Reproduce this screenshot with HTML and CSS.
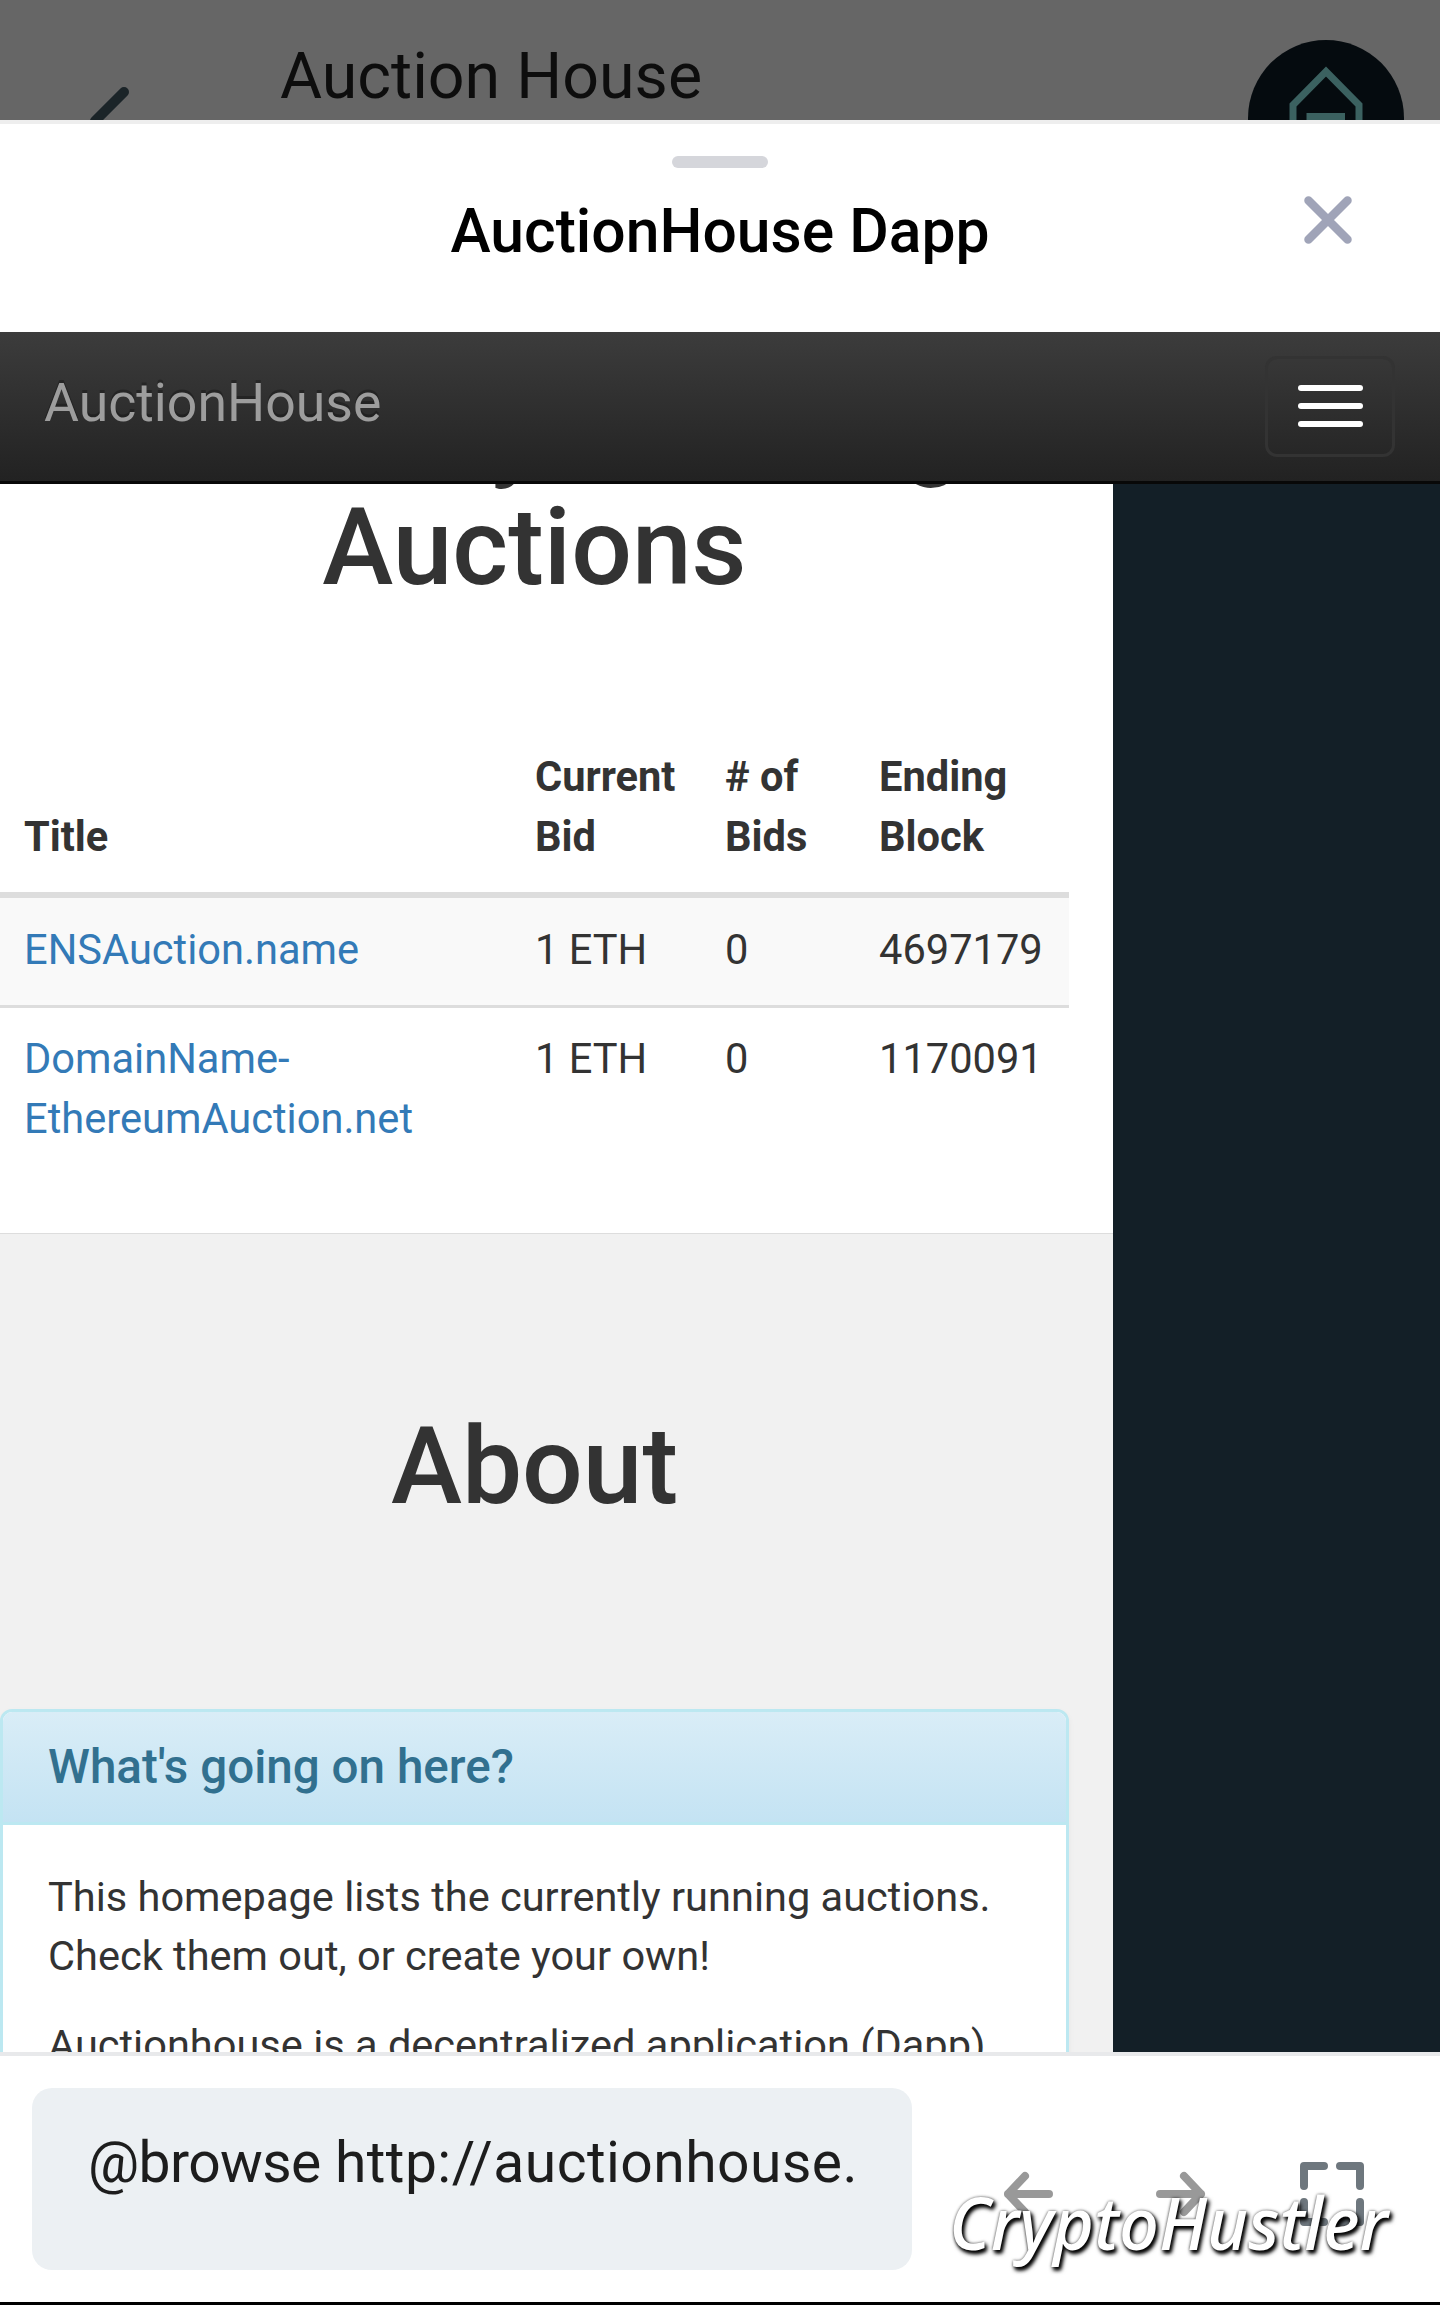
FILE: index.html
```
<!DOCTYPE html>
<html lang="en">
<head>
  <meta charset="UTF-8" />
  <title>AuctionHouse Dapp</title>
  <link rel="stylesheet" href="styles.css">
</head>
<body>
  <header class="chat-header">
    <svg class="back" width="60" height="60" viewBox="0 0 60 60"><path d="M39 7 L10 36 L39 65" /></svg>
    <span class="chat-title">Auction House</span>
    <svg class="avatar" width="156" height="80" viewBox="0 0 156 80">
      <circle cx="78" cy="78" r="78" />
      <path d="M45 110 V65 L78 31.5 L111 65 V110 Z" />
      <path d="M62 76.5 H93.5 V110 H62 Z" />
    </svg>
  </header>

  <div class="sheet-header">
    <div class="grip"></div>
    <h2 class="sheet-title">AuctionHouse Dapp</h2>
    <svg class="close" width="48" height="48" viewBox="0 0 48 48"><path d="M4.5 4.5 L43.5 43.5 M43.5 4.5 L4.5 43.5" /></svg>
  </div>

  <nav class="navbar">
    <a class="brand">AuctionHouse</a>
    <button class="toggle" type="button"><span></span><span></span><span></span></button>
  </nav>

  <main class="webview">
    <div class="page">
      <section class="auctions">
        <h1>Currently Running Auctions</h1>
        <table>
          <colgroup><col class="c-title"><col class="c-bid"><col class="c-count"><col class="c-block"></colgroup>
          <thead>
            <tr><th>Title</th><th>Current Bid</th><th># of<br>Bids</th><th>Ending Block</th></tr>
          </thead>
          <tbody>
            <tr class="odd"><td><a>ENSAuction.name</a></td><td>1 ETH</td><td>0</td><td>4697179</td></tr>
            <tr><td><a>DomainName-<br>EthereumAuction.net</a></td><td>1 ETH</td><td>0</td><td>1170091</td></tr>
          </tbody>
        </table>
      </section>

      <section class="about">
        <h1>About</h1>
        <div class="panel">
          <div class="panel-heading">What's going on here?</div>
          <div class="panel-body">
            <p>This homepage lists the currently running auctions. Check them out, or create your own!</p>
            <p>Auctionhouse is a decentralized application (Dapp)</p>
          </div>
        </div>
      </section>
    </div>
  </main>

  <footer class="toolbar">
    <div class="command"><span class="cmd-name">@browse</span> <span class="cmd-url">http://auctionhouse.</span></div>
    <svg class="arrow" width="50" height="48" viewBox="0 0 50 48"><path d="M45 24 H4 M21 6 L4 24 L21 42" /></svg>
    <svg class="arrow next" width="50" height="48" viewBox="0 0 50 48"><path d="M4 24 H45 M28 6 L45 24 L28 42" /></svg>
    <svg class="expand" width="64" height="64" viewBox="0 0 64 64"><path d="M24 4 H4 V24 M40 4 H60 V24 M4 40 V60 H24 M60 40 V60 H40" /></svg>
    <span class="watermark">CryptoHustler</span>
  </footer>
</body>
</html>
```
FILE: styles.css
```
* { box-sizing: border-box; }
body { margin: 0; width: 1440px; height: 2305px; overflow: hidden; display: flex; flex-direction: column; background: #fff; font-family: Roboto, sans-serif; color: #333; }
svg { display: block; fill: none; stroke-linecap: round; stroke-linejoin: round; }
h1, h2, p { margin: 0; }

/* dimmed chat header behind the sheet */
.chat-header { height: 120px; flex: none; overflow: hidden; display: flex; align-items: flex-start; background: #666; }
.back { margin: 85px 0 0 85px; stroke: #1b2428; stroke-width: 10; }
.chat-title { margin: 38px auto 0 135px; font-size: 64.5px; line-height: 76px; color: #0d0d0d; white-space: nowrap; }
.avatar { margin: 40px 36px 0 0; }
.avatar circle { fill: #050b0f; }
.avatar path { stroke: #3b6160; stroke-width: 7; stroke-linecap: butt; stroke-linejoin: miter; }

.sheet-header { position: relative; height: 212px; flex: none; border-top: 4px solid #eee; padding-top: 32px; }
.grip { width: 96px; height: 12px; margin: 0 auto; border-radius: 6px; background: #d5d6db; }
.sheet-title { margin-top: 28px; text-align: center; font-size: 60.6px; font-weight: 500; line-height: 71px; color: #000; }
.close { position: absolute; right: 88px; top: 72px; stroke: #a0a4b8; stroke-width: 8.5; }

.navbar { height: 152px; flex: none; display: flex; justify-content: space-between; align-items: flex-start; padding: 24px 45px 0 44px; border-bottom: 3px solid #080808; background: linear-gradient(#3c3c3c, #222); }
.brand { margin-top: 17px; font-size: 53.6px; line-height: 60px; color: #9d9d9d; text-shadow: 0 -3px 0 rgba(0,0,0,0.25); }
.toggle { width: 130px; height: 101px; padding: 0 0 2px; display: flex; flex-direction: column; align-items: center; justify-content: center; gap: 12px; border: 3px solid #333; border-radius: 12px; background: transparent; }
.toggle span { width: 65px; height: 6px; border-radius: 3px; background: #fff; }

.webview { height: 1568px; flex: none; overflow: hidden; background: #131f27; }
.page { width: 1113px; background: #f1f1f1; }
h1 { font-size: 107.1px; font-weight: 500; line-height: 118px; text-align: center; }
.auctions { height: 750px; padding-right: 44px; overflow: hidden; background: #fff; border-bottom: 1px solid #ddd; }
.auctions h1 { margin-top: -113px; padding: 0 40px; }
table { width: 1069px; margin-top: 115px; table-layout: fixed; border-collapse: separate; border-spacing: 0; font-size: 41.6px; line-height: 59.6px; }
.c-title { width: 511px; }
.c-bid { width: 190px; }
.c-count { width: 154px; }
.c-block { width: 214px; }
th { padding: 25px 0 25.8px 24px; text-align: left; vertical-align: bottom; border-bottom: 6px solid #ddd; }
td { padding: 22px 0 25.4px 24px; vertical-align: top; }
tr + tr td { padding-top: 21px; border-top: 3px solid #ddd; }
.odd { background: #f9f9f9; }
td a { color: #337ab7; }

.about { padding: 174px 44px 0 0; }
.panel { margin-top: 183px; height: 600px; border: 3px solid #bce8f1; border-radius: 12px; background: #fff; box-shadow: 0 3px 6px rgba(0,0,0,0.05); overflow: hidden; }
.panel-heading { padding: 29px 45px 29px; border-bottom: 3px solid #bce8f1; background: linear-gradient(#d9edf7, #c4e3f3); font-size: 47.6px; font-weight: 500; line-height: 52px; color: #31708f; }
.panel-body { padding: 41.5px 45px; font-size: 41.55px; line-height: 59.6px; }
.panel-body p { margin-bottom: 29.7px; }

.toolbar { position: relative; height: 253px; flex: none; display: flex; align-items: flex-start; padding: 32px 76px 0 32px; border-top: 4px solid #e8e9eb; border-bottom: 3px solid #000; }
.command { width: 880px; height: 182px; padding: 41px 0 0 56px; border-radius: 20px; background: #ecf0f3; font-size: 57px; line-height: 67px; color: #1d1d1d; white-space: nowrap; }
.cmd-name { letter-spacing: -0.6px; }
.cmd-url { letter-spacing: 0.45px; }
.arrow { margin: 82px 0 0 92px; stroke: #999; stroke-width: 8; }
.next { margin-left: 102px; }
.expand { margin: 74px 0 0 auto; stroke: #6e777e; stroke-width: 8; }
.watermark { position: absolute; left: 949px; top: 117px; transform: scaleX(0.975); transform-origin: left; font-family: "Noto Sans", sans-serif; font-style: italic; font-size: 72px; font-weight: 500; line-height: 98px; color: #fff; text-shadow: 0 0 3px rgba(0,0,0,0.6), 2px 3px 4px #000, 2px 3px 5px rgba(0,0,0,0.7); }
```
